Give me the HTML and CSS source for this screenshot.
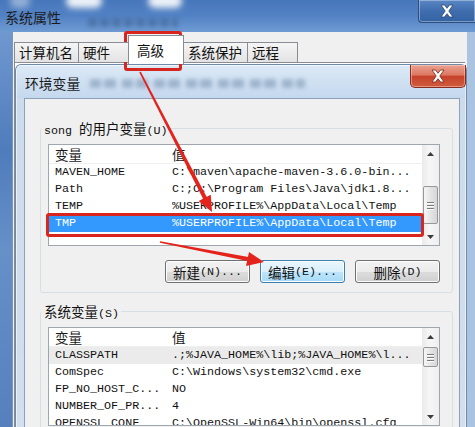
FILE: index.html
```html
<!DOCTYPE html>
<html lang="zh-CN">
<head>
<meta charset="utf-8">
<title>系统属性</title>
<link rel="stylesheet" href="styles.css">
</head>
<body>
<div class="win">
  <div class="win-title">
    <span class="zh win-title-text">系统属性</span>
    <div class="glow glow-a"></div>
    <div class="glow glow-b"></div>
    <div class="glow glow-c"></div>
    <div class="title-ghost"></div>
    <div class="win-close">
      <svg width="16" height="14" viewBox="0 0 16 14"><path d="M2 1h3.5L8 4.3 10.5 1H14L9.8 7 14 13h-3.5L8 9.7 5.5 13H2l4.2-6z" fill="#fff" stroke="#28466f" stroke-width=".8"/></svg>
    </div>
  </div>
  <div class="win-body">
    <div class="frame-left"></div>
    <div class="client">
      <div class="tabs">
        <div class="tab zh">计算机名</div>
        <div class="tab zh">硬件</div>
        <div class="tab tab-sel zh">高级</div>
        <div class="tab zh">系统保护</div>
        <div class="tab zh">远程</div>
      </div>
      <div class="panel"></div>
    </div>
    <div class="frame-right"></div>
  </div>
</div>

<div class="dlg">
  <div class="dlg-title">
    <span class="zh dlg-title-text">环境变量</span>
    <div class="dlg-ghost"></div>
    <div class="dlg-close">
      <svg width="16" height="14" viewBox="0 0 16 14"><path d="M2 1h3.5L8 4.3 10.5 1H14L9.8 7 14 13h-3.5L8 9.7 5.5 13H2l4.2-6z" fill="#fff" stroke="#7a2418" stroke-width=".8"/></svg>
    </div>
  </div>
  <div class="dlg-body">
    <fieldset class="group">
      <legend>song <span class="zh">的用户变量</span>(U)</legend>
      <div class="list list-user">
        <div class="list-main">
          <div class="list-head"><span class="c1 zh">变量</span><span class="c2 zh">值</span></div>
          <div class="row"><span class="c1">MAVEN_HOME</span><span class="c2">C:\maven\apache-maven-3.6.0-bin...</span></div>
          <div class="row"><span class="c1">Path</span><span class="c2">C:;C:\Program Files\Java\jdk1.8...</span></div>
          <div class="row"><span class="c1">TEMP</span><span class="c2">%USERPROFILE%\AppData\Local\Temp</span></div>
          <div class="row row-sel"><span class="c1">TMP</span><span class="c2">%USERPROFILE%\AppData\Local\Temp</span></div>
        </div>
        <div class="sb">
          <div class="sb-btn"><svg width="7" height="4" viewBox="0 0 7 4"><path d="M0 4L3.5 0L7 4Z" fill="#3d3d3d"/></svg></div>
          <div class="sb-track">
            <div class="thumb"><i class="grip"></i><i class="grip"></i><i class="grip"></i></div>
          </div>
          <div class="sb-btn"><svg width="7" height="4" viewBox="0 0 7 4"><path d="M0 0L3.5 4L7 0Z" fill="#3d3d3d"/></svg></div>
        </div>
      </div>
      <div class="btns">
        <button class="btn"><span class="zh">新建</span>(N)...</button>
        <button class="btn btn-hot"><span class="zh">编辑</span>(E)...</button>
        <button class="btn"><span class="zh">删除</span>(D)</button>
      </div>
    </fieldset>

    <fieldset class="group">
      <legend><span class="zh">系统变量</span>(S)</legend>
      <div class="list list-sys">
        <div class="list-main">
          <div class="list-head"><span class="c1 zh">变量</span><span class="c2 zh">值</span></div>
          <div class="row row-dim"><span class="c1">CLASSPATH</span><span class="c2">.;%JAVA_HOME%\lib;%JAVA_HOME%\l...</span></div>
          <div class="row"><span class="c1">ComSpec</span><span class="c2">C:\Windows\system32\cmd.exe</span></div>
          <div class="row"><span class="c1">FP_NO_HOST_C...</span><span class="c2">NO</span></div>
          <div class="row"><span class="c1">NUMBER_OF_PR...</span><span class="c2">4</span></div>
          <div class="row"><span class="c1">OPENSSL_CONF</span><span class="c2">C:\OpenSSL-Win64\bin\openssl.cfg</span></div>
        </div>
        <div class="sb">
          <div class="sb-btn"><svg width="7" height="4" viewBox="0 0 7 4"><path d="M0 4L3.5 0L7 4Z" fill="#3d3d3d"/></svg></div>
          <div class="sb-track">
            <div class="thumb thumb-sys"><i class="grip"></i><i class="grip"></i><i class="grip"></i></div>
          </div>
          <div class="sb-btn"><svg width="7" height="4" viewBox="0 0 7 4"><path d="M0 0L3.5 4L7 0Z" fill="#3d3d3d"/></svg></div>
        </div>
      </div>
    </fieldset>
  </div>
</div>

<svg class="arrows" width="475" height="427" viewBox="0 0 475 427">
  <polygon points="139.3,72.4 140.7,71.6 207.3,198.1 203.7,199.9" fill="#e3231c"/>
  <polygon points="212,212 198.6,200.9 210.8,194.7" fill="#e3231c"/>
  <polygon points="160.15,241.2 248.4,257 247.6,261 159.85,242.8" fill="#e3231c"/>
  <polygon points="264,262 246,266 249,252" fill="#e3231c"/>
</svg>
<div class="mark mark-tab"></div>
<div class="mark mark-row"></div>
</body>
</html>
```

FILE: styles.css
```css
* { box-sizing: border-box; }
html, body { margin: 0; padding: 0; }
body {
  width: 475px;
  height: 427px;
  overflow: hidden;
  position: relative;
  background: #5a86c2;
  font-family: "Liberation Mono", "Noto Sans CJK SC", monospace;
  font-size: 11.7px;
  color: #111;
}
.zh { font-family: "Noto Sans CJK SC", sans-serif; font-size: 13.5px; }

/* outer window */
.win {
  position: absolute;
  left: 0;
  top: 0;
  width: 475px;
  height: 427px;
  display: flex;
  flex-direction: column;
}
.win-title {
  position: relative;
  height: 32px;
  flex: none;
  display: flex;
  align-items: flex-start;
  background: linear-gradient(to bottom, #4777bb 0, #5282c4 50%, #6f9bd3 100%);
}
.win-title-text {
  line-height: 20px;
  padding: 7px 0 0 5px;
  color: #1b1b1b;
  font-size: 14px;
  position: relative;
  z-index: 1;
}
.glow {
  position: absolute;
  top: -6px;
  height: 14px;
  background: #fff;
  border-radius: 7px;
  filter: blur(3px);
  opacity: .9;
}
.glow-a { left: 66px; width: 36px; }
.glow-b { left: 148px; width: 34px; }
.glow-c { left: 10px; width: 20px; opacity: .4; }
.title-ghost {
  position: absolute;
  left: 88px;
  top: 18px;
  width: 90px;
  height: 9px;
  background: repeating-linear-gradient(to right, #3d5f8f 0 9px, transparent 9px 12px);
  filter: blur(2px);
  opacity: .5;
}
.win-close {
  margin-left: auto;
  width: 57px;
  height: 23px;
  border: 1px solid #2c4f7e;
  border-top: none;
  border-right: none;
  border-radius: 0 0 0 4px;
  background: linear-gradient(to bottom, #5a87c4 0, #3f6dad 50%, #3463a3 100%);
  box-shadow: inset 0 0 0 1px rgba(255, 255, 255, .35);
  display: flex;
  align-items: center;
  justify-content: center;
}
.win-body { flex: 1; display: flex; }
.frame-left {
  width: 12px;
  background: linear-gradient(to bottom, #6f98cf 0, #4f7cbc 30%, #6590c8 55%, #5580bd 100%);
}
.frame-right { width: 8px; background: #a9c3e0; }
.client {
  flex: 1;
  background: #f0f0f0;
  border-left: 1px solid #7f95ad;
  padding-left: 1px;
  display: flex;
  flex-direction: column;
}
.tabs {
  height: 30px;
  flex: none;
  display: flex;
  align-items: flex-end;
  position: relative;
  z-index: 1;
}
.tab {
  height: 20px;
  min-width: 51px;
  padding: 0 5px 0 4px;
  border: 1px solid #898c95;
  border-bottom: none;
  background: linear-gradient(to bottom, #f5f5f5, #e3e3e3);
  line-height: 19px;
  color: #111;
  white-space: nowrap;
}
.tab + .tab { margin-left: -1px; }
.tab-sel {
  height: 29px;
  min-width: 56px;
  padding: 5px 5px 0 8px;
  margin-left: -3px;
  margin-bottom: -2px;
  background: #fff;
}
.panel {
  flex: 1;
  margin-right: 2px;
  border-top: 1px solid #898c95;
  border-left: 1px solid #898c95;
  background: #fff;
}

/* environment variables dialog */
.dlg {
  position: absolute;
  left: 15px;
  top: 64px;
  width: 452px;
  height: 380px;
  border: 1px solid #6f8aa8;
  border-bottom: none;
  border-radius: 6px 6px 0 0;
  padding: 0 6px 0 8px;
  background: linear-gradient(to bottom, #dce9f6 0, #c4d8ed 33px, #cddcec 33px, #d2dfec 100%);
  box-shadow: inset 0 0 0 1px rgba(255, 255, 255, .55);
  display: flex;
  flex-direction: column;
}
.dlg-title {
  height: 33px;
  flex: none;
  display: flex;
  align-items: flex-start;
}
.dlg-title-text {
  line-height: 20px;
  padding: 8px 0 0 1px;
  color: #1b1b1b;
  font-size: 13.8px;
}
.dlg-ghost {
  margin: 14px 0 0 10px;
  width: 215px;
  height: 9px;
  background: repeating-linear-gradient(to right, #93aac4 0 11px, transparent 11px 14px, #93aac4 14px 26px, transparent 26px 32px);
  filter: blur(2px);
  opacity: .8;
}
.dlg-close {
  margin-left: auto;
  margin-right: -6px;
  width: 56px;
  height: 23px;
  border: 1px solid #8a2b1f;
  border-top: none;
  border-radius: 0 0 5px 5px;
  background: linear-gradient(to bottom, #eaa190 0, #dc7762 45%, #c6432b 52%, #cf5a3e 100%);
  box-shadow: inset 0 0 0 1px rgba(255, 220, 210, .45);
  display: flex;
  align-items: center;
  justify-content: center;
}
.dlg-body {
  flex: 1;
  background: #f0f0f0;
  border: 1px solid #8ca2ba;
  border-bottom: none;
  padding: 21px 6px 0 15px;
}

.group {
  margin: 0;
  min-width: 0;
  border: 1px solid #d5dfe5;
  border-radius: 3px;
  padding: 8px 12px 9px 7px;
}
.group + .group { margin-top: 10px; }
.group legend {
  padding: 0 2px;
  margin-left: -6px;
  height: 16px;
  line-height: 16px;
  white-space: nowrap;
}

.list {
  display: flex;
  height: 102px;
  border: 1px solid #9ea6b0;
  background: #fff;
  overflow: hidden;
}
.list-sys { height: 99px; }
.list-main { flex: 1; min-width: 0; }
.list-head {
  height: 19px;
  display: flex;
  align-items: center;
  line-height: 18px;
  border-bottom: 1px solid #efefef;
  color: #1a1a1a;
}
.row {
  height: 17px;
  display: flex;
  align-items: center;
  line-height: 17px;
  white-space: nowrap;
}
.c1 { width: 123px; padding-left: 6px; flex: none; }
.c2 { flex: 1; overflow: hidden; }
.row-sel { background: #3399ff; color: #fff; }
.row-dim { background: #ebebeb; }

.sb {
  width: 17px;
  flex: none;
  display: flex;
  flex-direction: column;
  background: linear-gradient(to right, #eaeaea, #f6f6f6 45%, #eeeeee);
}
.sb-btn {
  height: 17px;
  flex: none;
  display: flex;
  align-items: center;
  justify-content: center;
}
.sb-track { flex: 1; }
.thumb {
  margin: 24px 1px 0;
  height: 38px;
  border: 1px solid #979797;
  border-radius: 2px;
  background: linear-gradient(to right, #f6f6f6, #e4e4e4 50%, #d6d6d6);
  display: flex;
  flex-direction: column;
  align-items: center;
  justify-content: center;
  gap: 2px;
}
.thumb-sys { margin-top: 2px; height: 20px; }
.grip {
  display: block;
  width: 7px;
  height: 1px;
  background: #7a7a7a;
  box-shadow: 0 1px 0 #fff;
}

.btns {
  display: flex;
  justify-content: flex-end;
  gap: 10px;
  margin-top: 14px;
}
.btn {
  width: 85px;
  height: 23px;
  padding: 0;
  border: 1px solid #707070;
  border-radius: 3px;
  background: linear-gradient(to bottom, #f2f2f2 0, #ebebeb 50%, #dddddd 50%, #cfcfcf 100%);
  box-shadow: inset 0 0 0 1px #fcfcfc;
  font: inherit;
  color: #111;
  line-height: 16px;
  display: flex;
  align-items: center;
  justify-content: center;
}
.btn-hot {
  border-color: #3c7fb1;
  background: linear-gradient(to bottom, #eaf6fd 0, #d9f0fc 50%, #bee6fd 50%, #a7d9f5 100%);
}

/* annotations drawn over the screenshot */
.arrows { position: absolute; left: 0; top: 0; pointer-events: none; }
.mark {
  position: absolute;
  border: 3px solid #d8251d;
  border-radius: 3px;
  pointer-events: none;
}
.mark-tab { left: 124px; top: 31px; width: 58px; height: 40px; }
.mark-row { left: 46px; top: 213px; width: 378px; height: 24px; }
```
